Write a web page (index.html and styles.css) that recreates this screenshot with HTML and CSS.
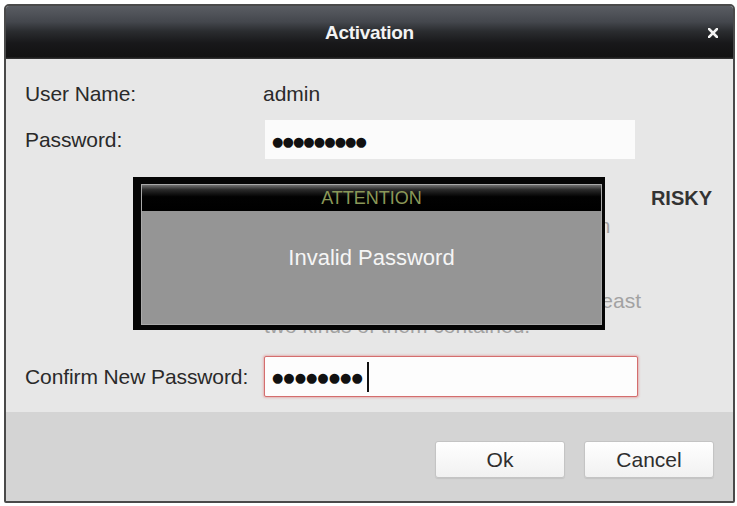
FILE: index.html
```html
<!DOCTYPE html>
<html>
<head>
<meta charset="utf-8">
<link rel="stylesheet" href="styles.css">
</head>
<body>
<div class="win">
  <div class="titlebar">
    <span class="spacer"></span>
    <span class="title">Activation</span>
    <span class="close"><svg width="10" height="10" viewBox="0 0 10 10"><path d="M1 1L9 9M9 1L1 9" stroke="#f2f2f2" stroke-width="2.6" stroke-linecap="square"/></svg></span>
  </div>
  <div class="content">
    <div class="row row-user"><span class="label">User Name:</span><span class="value">admin</span></div>
    <div class="row row-pass"><span class="label">Password:</span><div class="field"><span class="dots">●●●●●●●●●</span></div></div>
    <div class="strength"><span class="risky">RISKY</span></div>
    <p class="hint">Valid password range [8-16]. You can<br>use a combination of numbers,<br>lowercase, uppercase and special<br>character for your password with at least<br>two kinds of them contained.</p>
    <div class="row row-confirm"><span class="label">Confirm New Password:</span><div class="field field-error"><span class="dots dots-wide">●●●●●●●●</span><span class="caret"></span></div></div>
  </div>
  <div class="footer">
    <button class="btn">Ok</button>
    <button class="btn">Cancel</button>
  </div>
  <div class="attention">
    <div class="att-inner">
      <div class="att-head">ATTENTION</div>
      <div class="att-msg">Invalid Password</div>
    </div>
  </div>
</div>
</body>
</html>
```
FILE: styles.css
```css
html, body {
  margin: 0;
  padding: 0;
  background: #ffffff;
}
body {
  font-family: "Liberation Sans", Arial, sans-serif;
  padding: 4px 2px 0 4px;
}
.win {
  position: relative;
  width: 731px;
  height: 499px;
  box-sizing: border-box;
  border: 2px solid #4a4a4a;
  border-radius: 5px 5px 2px 2px;
  display: flex;
  flex-direction: column;
  overflow: hidden;
  background: #e7e7e7;
}
.titlebar {
  height: 53px;
  flex: none;
  display: flex;
  align-items: center;
  padding: 0 15px;
  background: linear-gradient(#5a5d63 0%, #44474d 30%, #2a2c2f 48%, #18181a 70%, #121212 96%, #3a3a3a 100%);
}
.spacer, .close {
  width: 10px;
  height: 10px;
  display: flex;
}
.title {
  flex: 1;
  text-align: center;
  color: #f3f3f3;
  font-weight: bold;
  font-size: 19px;
  letter-spacing: -0.3px;
}
.content {
  height: 353px;
  flex: none;
  box-sizing: border-box;
  padding: 20px 0 0 19px;
  display: flex;
  flex-direction: column;
  background: #e7e7e7;
}
.row {
  display: flex;
  align-items: center;
}
.label {
  width: 239px;
  flex: none;
  font-size: 21px;
  color: #2a2a2a;
  letter-spacing: -0.1px;
}
.row-user {
  height: 30px;
}
.value {
  font-size: 21px;
  color: #2a2a2a;
  margin-left: -1px;
}
.row-pass {
  margin-top: 11px;
}
.field {
  width: 370px;
  height: 39px;
  box-sizing: border-box;
  background: #fbfbfb;
  display: flex;
  align-items: center;
  padding: 4px 0 0 7px;
  margin-left: 1px;
}
.dots {
  font-family: "DejaVu Sans", sans-serif;
  font-size: 13px;
  letter-spacing: -0.9px;
  color: #111;
  line-height: 20px;
}
.dots-wide {
  letter-spacing: 0;
}
.strength {
  height: 30px;
  margin-top: 24px;
  display: flex;
  justify-content: flex-end;
  align-items: center;
  padding-right: 21px;
}
.risky {
  font-size: 20px;
  font-weight: bold;
  color: #333;
}
.hint {
  margin: 0;
  font-size: 21px;
  line-height: 25px;
  color: #a2a2a2;
  white-space: nowrap;
  padding-left: 239px;
}
.row-confirm {
  margin-top: 18px;
}
.field-error {
  width: 374px;
  height: 41px;
  margin-left: 0;
  border: 1px solid #d46e6e;
  border-radius: 2px;
  box-shadow: 0 0 2px 1px rgba(225, 120, 120, 0.45);
  background: #fdfdfd;
  padding: 3px 0 0 7px;
}
.caret {
  width: 2px;
  height: 30px;
  background: #111;
  margin-left: 4px;
  margin-top: -3px;
}
.footer {
  flex: 1;
  background: #d4d4d4;
  display: flex;
  justify-content: flex-end;
  align-items: flex-start;
  gap: 19px;
  padding: 29px 19px 0 0;
}
.btn {
  width: 130px;
  height: 37px;
  border: 1px solid #c4c4c4;
  border-radius: 3px;
  background: linear-gradient(#ffffff, #f1f1f1);
  box-shadow: 0 1px 1px rgba(0, 0, 0, 0.08);
  font-family: "Liberation Sans", Arial, sans-serif;
  font-size: 21px;
  color: #2e2e2e;
  padding: 0;
}
.attention {
  position: absolute;
  left: 127px;
  top: 171px;
  width: 472px;
  height: 153px;
  box-sizing: border-box;
  background: #050505;
  padding: 7px 3px 5px 8px;
}
.att-inner {
  height: 100%;
  box-sizing: border-box;
  border: 1px solid #a9a9a9;
  background: #959595;
}
.att-head {
  height: 26px;
  line-height: 27px;
  text-align: center;
  font-size: 18px;
  color: #8a9858;
  background: linear-gradient(#707070 0%, #2a2a2a 18%, #020202 45%, #000 100%);
}
.att-msg {
  text-align: center;
  padding-top: 35px;
  font-size: 22px;
  line-height: 24px;
  color: #f5f5f5;
}
```
